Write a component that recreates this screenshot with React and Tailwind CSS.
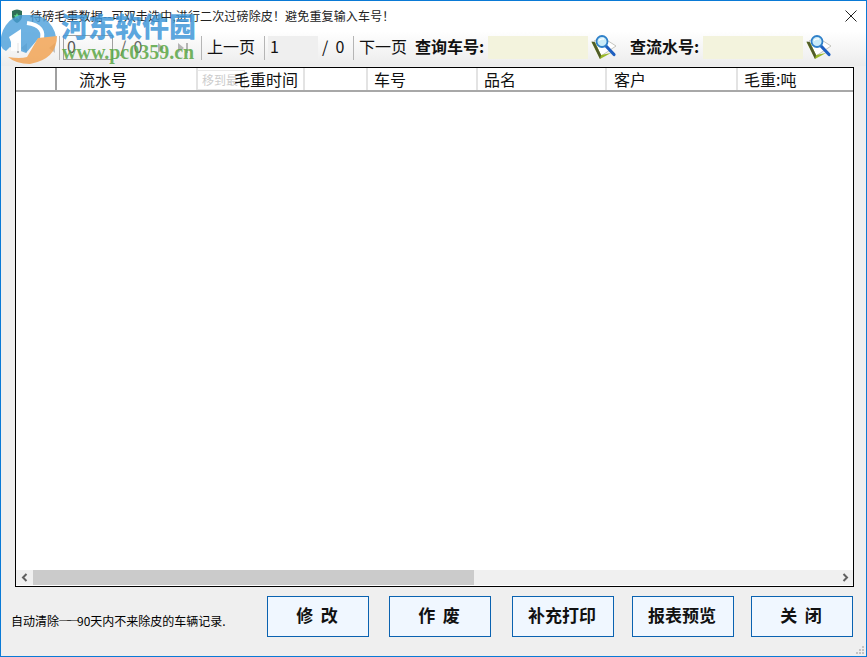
import React from "react";

const cjk = { fontFamily: '"Noto Sans CJK SC", sans-serif' };

const columns = [
  { w: "w-[41px]", label: "", pl: "", line: "border-[#a0a0a0]" },
  { w: "w-[141px]", label: "流水号", pl: "pl-[22px]", line: "border-[#e3e3e3]" },
  { w: "w-[107px]", label: "毛重时间", pl: "pl-[36px]", line: "border-[#e3e3e3]" },
  { w: "w-[63px]", label: "", pl: "", line: "border-[#e3e3e3]" },
  { w: "w-[110px]", label: "车号", pl: "pl-[6px]", line: "border-[#e3e3e3]" },
  { w: "w-[129px]", label: "品名", pl: "pl-[6px]", line: "border-[#e3e3e3]" },
  { w: "w-[131px]", label: "客户", pl: "pl-[7px]", line: "border-[#e3e3e3]" },
  { w: "flex-1", label: "毛重:吨", pl: "pl-[6px]", line: "border-transparent" },
];

const Sep = ({ className = "" }) => <div className={`w-px h-[24px] bg-[#b5b5b5] shrink-0 ${className}`} />;

const SearchIcon = () => (
  <svg width="28" height="28" viewBox="0 0 28 28" className="ml-[3px] shrink-0">
    <path d="M3 7 L11 3 L25 12 L10 22 Z" fill="#ffffff" stroke="#b8b8b0" strokeWidth="0.8" />
    <path d="M0.5 8 L9 25 L20 19 L10 21 L4 8 Z" fill="#9ab82a" />
    <path d="M0.5 7.5 L3.5 8 L10 21 L9 25 Z" fill="#4f5a2c" />
    <path d="M15 12 L23 20.5" stroke="#1f5fc0" strokeWidth="3.2" strokeLinecap="round" />
    <circle cx="11" cy="7.5" r="5.5" fill="#c9ebf8" stroke="#2f80c9" strokeWidth="1.8" />
    <path d="M8 6.5 Q10 4.5 13 5" stroke="#ffffff" strokeWidth="1.4" fill="none" />
  </svg>
);

const TitleIcon = () => (
  <svg width="12" height="14" viewBox="0 0 12 14" className="shrink-0">
    <path d="M1 2 Q6 -1 11 2 L11 8 Q10 12 6 14 Q2 12 1 8 Z" fill="#2f6f57" />
    <path d="M6 4 L7 6.3 L9.4 6.5 L7.6 8 L8.2 10.4 L6 9.1 L3.8 10.4 L4.4 8 L2.6 6.5 L5 6.3 Z" fill="#5fe08a" />
  </svg>
);

const Tri = ({ dir, bar }) => (
  <svg width="16" height="14" viewBox="0 0 16 14" className="shrink-0">
    {dir === "left" ? (
      <path d="M12 2 L12 12 L6 7 Z" fill="#c4c4c4" />
    ) : (
      <path d="M4 2 L4 12 L10 7 Z" fill="#b4b4b4" />
    )}
    {bar && <rect x={dir === "left" ? 2 : 12} y="2" width="2" height="10" fill="#b4b4b4" />}
  </svg>
);

const Btn = ({ children, className = "" }) => (
  <button
    className={`w-[102px] h-[41px] border border-[#0a62b0] bg-[#f0f7ff] pb-[3px] pr-[2px] text-[17px] font-bold text-[#111] whitespace-pre shrink-0 ${className}`}
    style={cjk}
  >
    {children}
  </button>
);

const App = () => {
  return (
    <div
      className="relative w-[867px] h-[657px] overflow-hidden border border-[#0a7ad6] bg-[#efefef] flex flex-col text-black"
      style={cjk}
    >
      {/* Title bar */}
      <div className="h-[30px] bg-white flex items-center pl-[10px] pr-[9px] shrink-0">
        <TitleIcon />
        <div className="ml-[7px] text-[12px] text-[#222] tracking-[0.15px] whitespace-pre">待磅毛重数据--可双击选中,进行二次过磅除皮！避免重复输入车号！</div>
        <svg width="12" height="12" viewBox="0 0 12 12" className="ml-auto">
          <path d="M0.5 0.5 L11.5 11.5 M11.5 0.5 L0.5 11.5" stroke="#222" strokeWidth="1" />
        </svg>
      </div>

      {/* Toolbar */}
      <div className="h-[35px] shrink-0 bg-gradient-to-b from-white to-[#ececec] flex items-center text-[16px] text-[#111] pl-[14px] pb-[2px]">
        <Tri dir="left" bar />
        <div className="w-[12px]" />
        <Tri dir="left" />
        <Sep />
        <div className="ml-[3px] w-[50px] h-[25px] border border-[#a0a0a0] pl-[3px] leading-[21px] text-[#555]">0</div>
        <div className="ml-[7px] mb-[3px] w-[34px] text-[#666] whitespace-pre">/  0</div>
        <Tri dir="right" />
        <div className="w-[4px]" />
        <Tri dir="right" bar />
        <div className="w-[11px]" />
        <Sep />
        <div className="ml-[5px] mb-[3px] w-[48px] whitespace-nowrap">上一页</div>
        <Sep className="ml-[9px]" />
        <div className="ml-[3px] w-[50px] h-[24px] bg-[#efefef] pl-[2px] leading-[21px]">1</div>
        <div className="ml-[4px] mb-[3px] w-[31px] whitespace-pre">/  0</div>
        <Sep />
        <div className="ml-[5px] mb-[3px] w-[48px] whitespace-nowrap">下一页</div>
        <div className="ml-[8px] mb-[3px] w-[73px] font-bold whitespace-nowrap">查询车号:</div>
        <div className="w-[100px] h-[23px] bg-[#f3f3dd]" />
        <SearchIcon />
        <div className="ml-[11px] mb-[3px] w-[73px] font-bold whitespace-nowrap">查流水号:</div>
        <div className="w-[100px] h-[23px] bg-[#f3f3dd]" />
        <SearchIcon />
      </div>

      {/* Grid */}
      <div className="relative ml-[14px] mt-[1px] w-[839px] h-[520px] border border-black bg-white flex flex-col shrink-0">
        <div className="relative z-10 h-[24px] border-b-2 border-[#a8a8a8] flex shrink-0 text-[16px] text-[#111] leading-[22px]">
          {columns.map((c, i) => (
            <div key={i} className={`${c.w} ${c.pl} border-r-2 ${c.line} whitespace-nowrap`}>
              {c.label}
            </div>
          ))}
        </div>
        {/* tooltip left over the header */}
        <div className="absolute left-[181px] top-[2px] h-[20px] w-[48px] border border-[#e8e8e8] bg-white text-[12px] leading-[18px] pl-[4px] text-[#cccccc] whitespace-nowrap">
          移到最
        </div>
        <div className="flex-1" />
        <div className="h-[15px] bg-[#f0f0f0] flex items-center shrink-0">
          <div className="w-[17px] flex justify-center">
            <svg width="7" height="9" viewBox="0 0 7 9"><path d="M5.5 1 L2 4.5 L5.5 8" fill="none" stroke="#606060" strokeWidth="2" /></svg>
          </div>
          <div className="w-[441px] h-full bg-[#cbcbcb]" />
          <div className="ml-auto w-[15px] flex justify-center">
            <svg width="7" height="9" viewBox="0 0 7 9"><path d="M1.5 1 L5 4.5 L1.5 8" fill="none" stroke="#606060" strokeWidth="2" /></svg>
          </div>
        </div>
        <div className="h-[1px] bg-white shrink-0" />
      </div>

      {/* Bottom bar */}
      <div className="flex items-start pt-[9px] pl-[10px]">
        <div className="w-[256px] pt-[15px] text-[12px] leading-[20px] whitespace-nowrap">
          自动清除<span className="tracking-[-4px] mr-[2px]">──</span>90天内不来除皮的车辆记录.
        </div>
        <Btn>修  改</Btn>
        <Btn className="ml-[20px]">作  废</Btn>
        <Btn className="ml-[21px]">补充打印</Btn>
        <Btn className="ml-[18px]">报表预览</Btn>
        <Btn className="ml-[17px]">关  闭</Btn>
      </div>

      {/* Size grip */}
      <svg width="10" height="10" viewBox="0 0 10 10" className="absolute right-[1px] bottom-[1px]">
        <path d="M7 1h2v2H7zM4 4h2v2H4zM7 4h2v2H7zM1 7h2v2H1zM4 7h2v2H4zM7 7h2v2H7z" fill="#c4c4c4" />
      </svg>

      {/* Watermark */}
      <div className="absolute left-[-1px] top-[13px] w-[200px] h-[52px] pointer-events-none">
        <svg width="60" height="50" viewBox="0 0 60 50" className="absolute left-0 top-[1px] opacity-80">
          <path d="M1 31 A27 27 0 1 1 56 22 L38 24 L26 38 L10 32 L6 36 Q2 34 1 31 Z" fill="#4a9fdb" />
          <path d="M9 22 L21 14 L21 36 L11 36 L11 27 Z" fill="#ffffff" />
          <path d="M27 8 Q47 11 41 27" fill="none" stroke="#ffffff" strokeWidth="4" />
          <path d="M57 21 Q57 44 30 49 Q16 49 8 42 Q20 44 27 42 L38 23 Z" fill="#f2a04c" />
        </svg>
        <div
          className="absolute left-[61px] top-[-2px] text-[27px] leading-[28px] font-black text-[#3f97d9]/85 whitespace-nowrap"
          style={{ fontFamily: '"Noto Sans CJK SC", serif' }}
        >
          河东软件园
        </div>
        <div
          className="absolute left-[62px] top-[27px] text-[20px] leading-[22px] font-bold text-[#5aa644]/85 whitespace-nowrap"
          style={{ fontFamily: '"Liberation Serif", serif' }}
        >
          www.pc0359.cn
        </div>
      </div>
    </div>
  );
};

export default App;
